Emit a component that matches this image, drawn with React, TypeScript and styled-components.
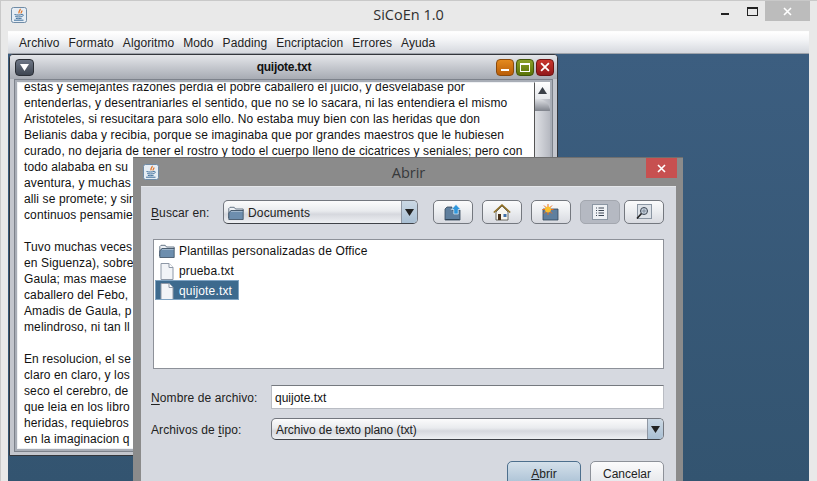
import React from "react"
import styled, { createGlobalStyle } from "styled-components"

const GlobalStyle = createGlobalStyle`
  html, body {
    margin: 0;
    padding: 0;
    height: 100%;
    overflow: hidden;
    background: #e9e9e9;
  }
  #root {
    height: 481px;
  }
  * {
    box-sizing: border-box;
  }
`

const ui = `"Liberation Sans", Arial, sans-serif`

const AppWindow = styled.div`
  width: 817px;
  height: 481px;
  display: flex;
  flex-direction: column;
  padding: 1px 8px 0 7px;
  background: #e9e9e9;
  border-top: 1px solid #c9c9c9;
  border-left: 1px solid #c9c9c9;
  overflow: hidden;
  position: relative;
  font-family: ${ui};
  font-size: 12px;
  color: #1a1a1a;
`

const AppTitleBar = styled.div`
  height: 29px;
  flex-shrink: 0;
  display: flex;
  align-items: center;
  justify-content: center;
  position: relative;
`

const AppTitle = styled.div`
  font-family: "Open Sans", "Noto Sans", sans-serif;
  font-size: 14.5px;
  color: #2f2f2f;
  margin-bottom: 4px;
`

const TitleIcon = styled.div`
  position: absolute;
  left: 3px;
  top: 5px;
  width: 16px;
  height: 16px;
`

const CaptionButtons = styled.div`
  position: absolute;
  right: -1px;
  top: -1px;
  display: flex;
  align-items: center;
`

const Caption = styled.div<{ $w: number; $close?: boolean }>`
  width: ${(p) => p.$w}px;
  height: 20px;
  display: flex;
  align-items: center;
  justify-content: center;
  background: ${(p) => (p.$close ? "#bcbcbc" : "transparent")};
`

const MenuBar = styled.div`
  height: 23px;
  flex-shrink: 0;
  display: flex;
  align-items: center;
  gap: 9px;
  padding: 0 0 0 11px;
  border-top: 1px solid #fdfdfd;
  border-bottom: 1px solid #9ea3ab;
  background: linear-gradient(#ffffff, #f4f5f7 35%, #d5d8de);
  font-size: 12px;
  letter-spacing: 0.08px;
  color: #222;
`

const Desktop = styled.div`
  flex: 1;
  position: relative;
  background: linear-gradient(#3c5e80, #335470);
`

const Frame = styled.div`
  position: absolute;
  left: 1px;
  top: 0;
  width: 549px;
  height: 402px;
  display: flex;
  flex-direction: column;
  border: 1px solid #33363c;
  border-radius: 4px 4px 0 0;
  background: #c3c6cd;
`

const FrameTitle = styled.div`
  height: 24px;
  flex-shrink: 0;
  display: flex;
  align-items: center;
  padding: 0 3px 0 5px;
  gap: 2px;
  border-radius: 3px 3px 0 0;
  background: linear-gradient(#e4e6ea, #a7abb3);
`

const FrameName = styled.div`
  flex: 1;
  padding-left: 38px;
  text-align: center;
  font-weight: bold;
  font-size: 12px;
  letter-spacing: -0.25px;
  color: #111;
`

const FrameButton = styled.div<{ $from: string; $to: string; $edge: string; $wide?: boolean }>`
  width: ${(p) => (p.$wide ? 19 : 18)}px;
  height: 17px;
  border-radius: 4px;
  border: 1px solid ${(p) => p.$edge};
  background: linear-gradient(${(p) => p.$from}, ${(p) => p.$to});
  display: flex;
  align-items: center;
  justify-content: center;
`

const FrameBody = styled.div`
  flex: 1;
  min-height: 0;
  margin: 0 4px 3px 4px;
  padding: 2px;
  display: flex;
  border: 1px solid #7d828b;
  background: #a8adb6;
`

const TextPane = styled.div`
  flex: 1;
  min-width: 0;
  padding: 0 0 0 6px;
  background: #fff;
  border: 1px solid #eef0f3;
  border-right: 1px solid #555;
  overflow: hidden;
`

const TextSheet = styled.div`
  margin-top: -4px;
`

const TextLine = styled.div`
  height: 16px;
  font-size: 12px;
  line-height: 16px;
  letter-spacing: 0.115px;
  color: #111;
  white-space: pre;
`

const ScrollBar = styled.div`
  width: 15px;
  flex-shrink: 0;
  display: flex;
  flex-direction: column;
  background: linear-gradient(90deg, #dfe1e5, #b6b9c1);
`

const ScrollArrow = styled.div`
  height: 17px;
  display: flex;
  align-items: center;
  justify-content: center;
  background: linear-gradient(#ffffff, #e6e8ec);
`

const ScrollThumb = styled.div`
  height: 12px;
  border-radius: 0 12px 0 0;
  background: linear-gradient(#dfe1e5, #7f838c);
`

const Dialog = styled.div`
  position: absolute;
  left: 125px;
  top: 103px;
  width: 550px;
  height: 340px;
  display: flex;
  flex-direction: column;
  padding: 0 7px 0 8px;
  background: #8b8b8b;
  border-top: 1px solid #6f6f6f;
`

const DialogTitleBar = styled.div`
  height: 28px;
  flex-shrink: 0;
  display: flex;
  align-items: center;
  justify-content: center;
  position: relative;
`

const DialogTitle = styled.div`
  font-family: "Open Sans", "Noto Sans", sans-serif;
  font-size: 14.5px;
  color: #37393b;
`

const DialogIcon = styled.div`
  position: absolute;
  left: 2px;
  top: 6px;
  width: 16px;
  height: 16px;
`

const DialogClose = styled.div`
  position: absolute;
  right: -1px;
  top: 0;
  width: 31px;
  height: 20px;
  background: #c75050;
  display: flex;
  align-items: center;
  justify-content: center;
`

const DialogBody = styled.div`
  flex: 1;
  display: flex;
  flex-direction: column;
  padding: 13px 12px 0 12px;
  background: #d6d9e0;
  border-top: 1px solid #e4e6ea;
`

const SearchRow = styled.div`
  height: 24px;
  display: flex;
  align-items: center;
`

const FieldLabel = styled.div<{ $w: number }>`
  width: ${(p) => p.$w}px;
  margin-left: -2px;
  padding-top: 2px;
  flex-shrink: 0;
  font-size: 12px;
  letter-spacing: 0.1px;
  color: #222;
  u {
    text-decoration-thickness: 1px;
    text-underline-offset: 2px;
  }
`

const Combo = styled.div<{ $w: number; $h: number }>`
  width: ${(p) => p.$w}px;
  height: ${(p) => p.$h}px;
  flex-shrink: 0;
  display: flex;
  align-items: center;
  border: 1px solid #72767e;
  border-bottom-color: #3f4248;
  border-radius: 5px;
  background: linear-gradient(#fbfbfc, #e9ebee 45%, #d6d8de 60%, #eef0f3);
  overflow: hidden;
`

const ComboText = styled.div<{ $tracking: number }>`
  flex: 1;
  display: flex;
  align-items: center;
  gap: 4px;
  padding: 2px 0 0 4px;
  font-size: 12px;
  letter-spacing: ${(p) => p.$tracking}px;
  color: #222;
`

const ComboArrow = styled.div`
  width: 16px;
  height: 100%;
  flex-shrink: 0;
  display: flex;
  align-items: center;
  justify-content: center;
  border-left: 1px solid #8f97a3;
  background: linear-gradient(#cbd8e4, #a9bfd3);
`

const ToolGroup = styled.div`
  display: flex;
  margin-left: 15px;
  gap: 9px;
`

const ToolButton = styled.div<{ $active?: boolean; $tight?: boolean }>`
  width: 40px;
  height: 24px;
  margin-left: ${(p) => (p.$tight ? "-5px" : "0")};
  display: flex;
  align-items: center;
  justify-content: center;
  border: 1px solid ${(p) => (p.$active ? "#a3a7af" : "#74787f")};
  border-radius: 5px;
  background: ${(p) =>
    p.$active ? "#b5b9c2" : "linear-gradient(#fbfbfc, #eceef1 45%, #d8dae0)"};
`

const FileList = styled.div`
  height: 130px;
  margin-top: 15px;
  padding: 0 1px 1px 1px;
  background: #fff;
  border: 1px solid #8d9199;
`

const FileRow = styled.div<{ $selected?: boolean }>`
  width: ${(p) => (p.$selected ? "84px" : "auto")};
  height: 20px;
  display: flex;
  align-items: center;
  gap: 4px;
  padding: 2px 0 0 4px;
  font-size: 12px;
  letter-spacing: 0.15px;
  color: ${(p) => (p.$selected ? "#fff" : "#111")};
  background: ${(p) => (p.$selected ? "#3d6a8e" : "transparent")};
  outline: ${(p) => (p.$selected ? "1px solid #7fa3c2" : "none")};
  outline-offset: -1px;
`

const FormRow = styled.div<{ $top: number }>`
  display: flex;
  align-items: center;
  margin-top: ${(p) => p.$top}px;
`

const NameInput = styled.div`
  flex: 1;
  height: 24px;
  display: flex;
  align-items: center;
  padding: 2px 0 0 3px;
  background: #fff;
  border: 1px solid #b9bcc3;
  border-top-color: #75797f;
  font-size: 12px;
  color: #111;
`

const ActionRow = styled.div`
  display: flex;
  justify-content: flex-end;
  gap: 9px;
  margin-top: 21px;
`

const ActionButton = styled.div<{ $primary?: boolean }>`
  width: 74px;
  height: 25px;
  display: flex;
  align-items: center;
  justify-content: center;
  border: 1px solid ${(p) => (p.$primary ? "#4d6f8d" : "#8d9199")};
  border-radius: 5px;
  background: ${(p) =>
    p.$primary
      ? "linear-gradient(#d4e0ea, #a9c0d4)"
      : "linear-gradient(#fbfbfc, #e4e6ea)"};
  font-size: 12px;
  color: #222;
`

// only the part of the lower lines that the dialog leaves visible
const PAGE_LINES = [
  "estas y semejantes razones perdia el pobre caballero el juicio, y desvelabase por",
  "entenderlas, y desentraniarles el sentido, que no se lo sacara, ni las entendiera el mismo",
  "Aristoteles, si resucitara para solo ello. No estaba muy bien con las heridas que don",
  "Belianis daba y recibia, porque se imaginaba que por grandes maestros que le hubiesen",
  "curado, no dejaria de tener el rostro y todo el cuerpo lleno de cicatrices y seniales; pero con",
  "todo alababa en su",
  "aventura, y muchas",
  "alli se promete; y sin",
  "continuos pensamie",
  "",
  "Tuvo muchas veces",
  "en Siguenza), sobre",
  "Gaula; mas maese",
  "caballero del Febo,",
  "Amadis de Gaula, p",
  "melindroso, ni tan ll",
  "",
  "En resolucion, el se",
  "claro en claro, y los",
  "seco el cerebro, de",
  "que leia en los libro",
  "heridas, requiebros",
  "en la imaginacion q",
]

function JavaIcon() {
  return (
    <svg width="16" height="16" viewBox="0 0 16 16">
      <rect x="0.5" y="0.5" width="15" height="15" rx="2" fill="#e6edf4" stroke="#6f8ba6" />
      <path d="M9 1.800c1.200 1.500-2.200 2.400-.8 4.600M10.800 3.500c.6 1.100-1.200 1.500-.6 2.900" fill="none" stroke="#e2762a" strokeWidth="1.300" />
      <path d="M3.500 7.500c2.200.7 5.300.7 7.500 0M4.300 9.500c2 .6 4.700.6 6.500 0M4.800 11.300c1.800.5 4 .5 5.800 0M3 13.200h9.500" fill="none" stroke="#3f6f9b" strokeWidth="1" />
      <path d="M11 7.500c1.600-.5 2 1.400 0 1.800" fill="none" stroke="#3f6f9b" strokeWidth="0.9" />
    </svg>
  )
}

function FolderIcon() {
  return (
    <svg width="16" height="16" viewBox="0 0 16 16">
      <path d="M.8 13V3.500L2 2.300h4.200L7.500 4h7.700v2H3z" fill="#eef1f5" stroke="#45586c" strokeWidth="0.8" />
      <path d="M.8 14.500V8l2-2.500h12.400v9z" fill="#6d8eae" stroke="#3a4d60" strokeWidth="0.8" />
      <path d="M3 6.500h11.500" stroke="#a5bbcf" strokeWidth="0.9" />
    </svg>
  )
}

function FileIcon() {
  return (
    <svg width="16" height="17" viewBox="0 0 16 17">
      <path d="M2 .5h8l4 4v12H2z" fill="#f2f4f7" stroke="#8e98a6" />
      <path d="M10 .5v4h4" fill="#fff" stroke="#8e98a6" />
    </svg>
  )
}

function UpFolderIcon() {
  return (
    <svg width="18" height="17" viewBox="0 0 18 17">
      <path d="M1 16V5l2-2h5v3h8v10z" fill="#5f7f9e" stroke="#33475b" strokeWidth="0.8" />
      <path d="M1.500 15.500h14" stroke="#2f4356" />
      <path d="M12 .5 16.800 5.500H14.200V10H9.800V5.500H7.200z" fill="#2f96dc" stroke="#fff" strokeWidth="0.6" />
    </svg>
  )
}

function HomeIcon() {
  return (
    <svg width="18" height="17" viewBox="0 0 18 17">
      <path d="M3 8v8h12V8L9 2z" fill="#f7f5ee" stroke="#4d4a40" strokeWidth="0.8" />
      <path d="M.8 8.500 9 1l8.200 7.500" fill="none" stroke="#8f6d1f" strokeWidth="1.500" />
      <rect x="5" y="10" width="3" height="6" fill="#4a3018" />
      <rect x="10.500" y="10" width="3" height="3" fill="#3f6fa8" />
    </svg>
  )
}

function NewFolderIcon() {
  return (
    <svg width="18" height="17" viewBox="0 0 18 17">
      <path d="M1 16V5h15v11z" fill="#5f7f9e" stroke="#33475b" strokeWidth="0.8" />
      <path d="M6 0v11M.5 5.500h11M2 1.500l8 8M10 1.500l-8 8" stroke="#ee6f1a" strokeWidth="1" />
      <circle cx="6" cy="5.500" r="3" fill="#fbc02d" />
    </svg>
  )
}

function ListViewIcon() {
  return (
    <svg width="16" height="16" viewBox="0 0 16 16">
      <rect x="0.5" y="0.5" width="15" height="15" fill="#eef1f5" stroke="#8b96a3" />
      <path d="M4 4h1M6.500 4H12M4 6.500h1M6.500 6.500H12M4 9h1M6.500 9H12M4 11.500h1M6.500 11.500H12" stroke="#3c4654" />
    </svg>
  )
}

function DetailIcon() {
  return (
    <svg width="16" height="16" viewBox="0 0 16 16">
      <rect x="1.500" y="0.500" width="14" height="14" fill="#dde2e8" stroke="#8b96a3" />
      <circle cx="8" cy="7" r="3.500" fill="#c8d3de" stroke="#3c4654" />
      <path d="M5.500 7h5M8 4.500v5" stroke="#6a7786" strokeWidth="0.7" />
      <path d="M5.500 9.500 1 14.500" stroke="#222" strokeWidth="1.600" />
    </svg>
  )
}

function CloseGlyph({ size = 9 }: { size?: number }) {
  return (
    <svg width={size} height={size} viewBox="0 0 9 9">
      <path d="M1 1l7 7M8 1 1 8" stroke="#fff" strokeWidth="1.600" />
    </svg>
  )
}

function Triangle({ dir = "down", color = "#222" }: { dir?: "up" | "down"; color?: string }) {
  return (
    <svg width="9" height="7" viewBox="0 0 9 7">
      <path d={dir === "down" ? "M0 0h9L4.500 7z" : "M4.500 0 9 7H0z"} fill={color} />
    </svg>
  )
}

export default function App() {
  const menus = ["Archivo", "Formato", "Algoritmo", "Modo", "Padding", "Encriptacion", "Errores", "Ayuda"]

  return (
    <>
      <GlobalStyle />
      <AppWindow>
        <AppTitleBar>
          <TitleIcon>
            <JavaIcon />
          </TitleIcon>
          <AppTitle>SiCoEn 1.0</AppTitle>
          <CaptionButtons>
            <Caption $w={27}>
              <svg width="9" height="8" viewBox="0 0 9 8">
                <rect width="8" height="2" y="6" fill="#222" />
              </svg>
            </Caption>
            <Caption $w={26}>
              <svg width="11" height="9" viewBox="0 0 11 9">
                <rect x="0.5" y="0.5" width="10" height="8" fill="none" stroke="#222" />
                <rect width="11" height="2" fill="#222" />
              </svg>
            </Caption>
            <Caption $w={45} $close>
              <CloseGlyph />
            </Caption>
          </CaptionButtons>
        </AppTitleBar>

        <MenuBar>
          {menus.map((m) => (
            <span key={m}>{m}</span>
          ))}
        </MenuBar>

        <Desktop>
          <Frame>
            <FrameTitle>
              <FrameButton $wide $from="#6e7786" $to="#3f4652" $edge="#2b2f36">
                <Triangle color="#fff" />
              </FrameButton>
              <FrameName>quijote.txt</FrameName>
              <FrameButton $from="#e48a1e" $to="#b95d08" $edge="#8a4a0c">
                <svg width="8" height="8" viewBox="0 0 8 8">
                  <rect width="8" height="2" y="6" fill="#fff" />
                </svg>
              </FrameButton>
              <FrameButton $from="#8aa02a" $to="#5a7408" $edge="#42560a">
                <svg width="10" height="9" viewBox="0 0 10 9">
                  <rect x="0.5" y="0.5" width="9" height="8" fill="none" stroke="#fff" />
                  <rect width="10" height="2" fill="#fff" />
                </svg>
              </FrameButton>
              <FrameButton $from="#c9362e" $to="#93191a" $edge="#6f1414">
                <CloseGlyph size={10} />
              </FrameButton>
            </FrameTitle>
            <FrameBody>
              <TextPane>
                <TextSheet>
                  {PAGE_LINES.map((line, i) => (
                    <TextLine key={i}>{line}</TextLine>
                  ))}
                </TextSheet>
              </TextPane>
              <ScrollBar>
                <ScrollArrow>
                  <Triangle dir="up" color="#3a3f47" />
                </ScrollArrow>
                <ScrollThumb />
              </ScrollBar>
            </FrameBody>
          </Frame>

          <Dialog>
            <DialogTitleBar>
              <DialogIcon>
                <JavaIcon />
              </DialogIcon>
              <DialogTitle>Abrir</DialogTitle>
              <DialogClose>
                <CloseGlyph />
              </DialogClose>
            </DialogTitleBar>
            <DialogBody>
              <SearchRow>
                <FieldLabel $w={72}>
                  <u>B</u>uscar en:
                </FieldLabel>
                <Combo $w={195} $h={24}>
                  <ComboText $tracking={0.15}>
                    <FolderIcon />
                    Documents
                  </ComboText>
                  <ComboArrow>
                    <Triangle />
                  </ComboArrow>
                </Combo>
                <ToolGroup>
                  <ToolButton>
                    <UpFolderIcon />
                  </ToolButton>
                  <ToolButton>
                    <HomeIcon />
                  </ToolButton>
                  <ToolButton>
                    <NewFolderIcon />
                  </ToolButton>
                  <ToolButton $active>
                    <ListViewIcon />
                  </ToolButton>
                  <ToolButton $tight>
                    <DetailIcon />
                  </ToolButton>
                </ToolGroup>
              </SearchRow>

              <FileList>
                <FileRow>
                  <FolderIcon />
                  Plantillas personalizadas de Office
                </FileRow>
                <FileRow>
                  <FileIcon />
                  prueba.txt
                </FileRow>
                <FileRow $selected>
                  <FileIcon />
                  quijote.txt
                </FileRow>
              </FileList>

              <FormRow $top={16}>
                <FieldLabel $w={120}>
                  <u>N</u>ombre de archivo:
                </FieldLabel>
                <NameInput>quijote.txt</NameInput>
              </FormRow>
              <FormRow $top={9}>
                <FieldLabel $w={120}>
                  Archivos de <u>t</u>ipo:
                </FieldLabel>
                <Combo $w={393} $h={22}>
                  <ComboText $tracking={-0.07}>Archivo de texto plano (txt)</ComboText>
                  <ComboArrow>
                    <Triangle />
                  </ComboArrow>
                </Combo>
              </FormRow>

              <ActionRow>
                <ActionButton $primary>
                  <span>
                    <u>A</u>brir
                  </span>
                </ActionButton>
                <ActionButton>Cancelar</ActionButton>
              </ActionRow>
            </DialogBody>
          </Dialog>
        </Desktop>
      </AppWindow>
    </>
  )
}
